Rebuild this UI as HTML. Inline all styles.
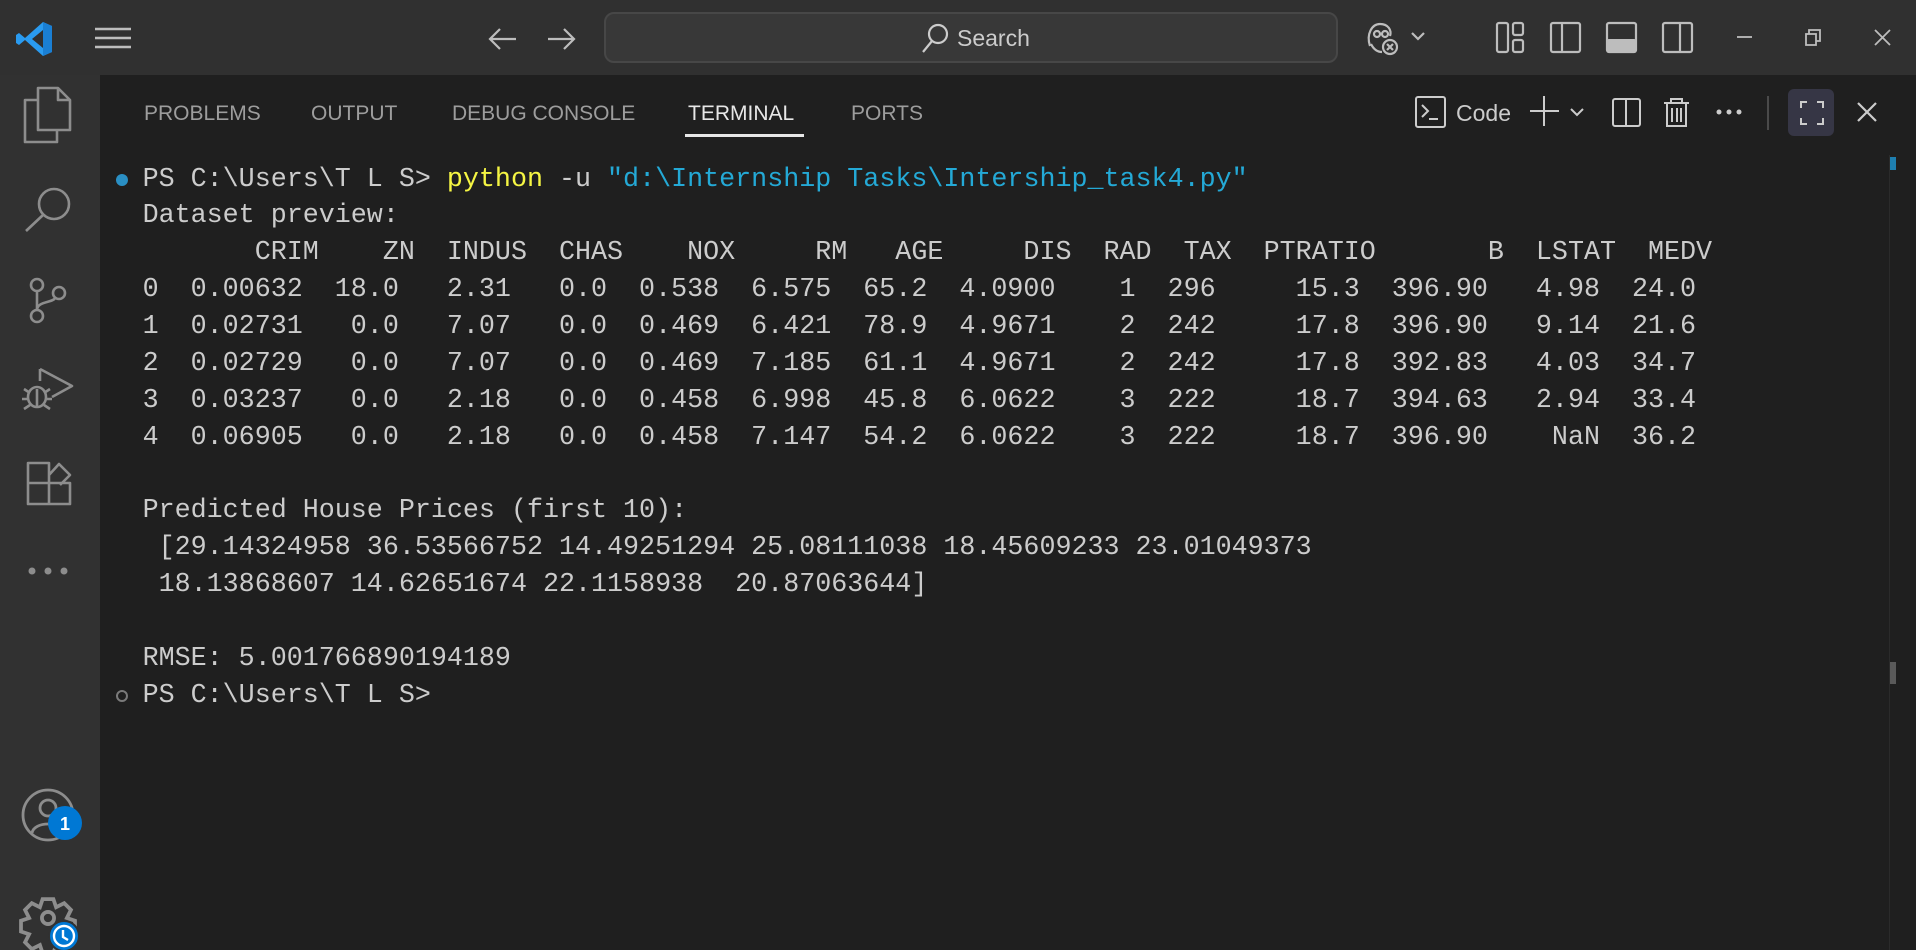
<!DOCTYPE html>
<html><head><meta charset="utf-8"><style>
*{margin:0;padding:0;box-sizing:border-box}
html,body{width:1916px;height:950px;overflow:hidden;background:#1f1f1f}
body{position:relative;font-family:"Liberation Sans",sans-serif}
.title{position:absolute;left:0;top:0;width:1916px;height:75px;background:#303030}
.act{position:absolute;left:0;top:75px;width:100px;height:875px;background:#313131}
.search{position:absolute;left:604px;top:12px;width:734px;height:51px;border:2px solid #474747;border-radius:10px;background:#383838}
.search span{position:absolute;left:351px;top:11px;font-size:23px;color:#cccccc}
.tab{position:absolute;top:102px;font-size:21px;color:#9d9d9d}
.term{position:absolute;left:142.6px;top:161.6px;font-family:"Liberation Mono",monospace;font-size:26.7px;line-height:36.86px;color:#cccccc;white-space:pre}
.y{color:#f5f543}.c{color:#24a9d6}
svg{position:absolute;overflow:visible}
</style></head><body>
<div class="title"></div>
<div class="act"></div>

<svg style="left:16px;top:20px" width="38" height="38" viewBox="0 0 38 38">
<path d="M27 2 L36 6 V32 L27 36 L9 20 L3 25 L0 23 V15 L3 13 L9 18 Z M27 10 L16 19 L27 28 Z" fill="#2a9bf0"/>
<path d="M27 2 L36 6 V32 L27 36 Z" fill="#1a7fd4"/>
</svg>
<svg style="left:95px;top:27px" width="36" height="22"><g stroke="#bdbdbd" stroke-width="2.4"><line x1="0" y1="2" x2="36" y2="2"/><line x1="0" y1="11" x2="36" y2="11"/><line x1="0" y1="20" x2="36" y2="20"/></g></svg>
<svg style="left:488px;top:26px" width="90" height="26"><g stroke="#bdbdbd" stroke-width="2.2" fill="none"><path d="M2 13 H28 M12 3 L2 13 L12 23"/><path d="M60 13 H86 M76 3 L86 13 L76 23"/></g></svg>
<div class="search"><svg style="left:314px;top:8px" width="30" height="32"><g stroke="#cccccc" stroke-width="2.2" fill="none"><circle cx="18" cy="12" r="9"/><line x1="12" y1="19" x2="3" y2="30"/></g></svg><span>Search</span></div>

<svg style="left:1366px;top:20px" width="64" height="36"><g stroke="#bdbdbd" stroke-width="2.2" fill="none"><path d="M4 26 C0 14 6 4 14 4 C22 4 26 10 24 16"/><circle cx="11" cy="14" r="3"/><circle cx="19" cy="14" r="3"/><path d="M5 24 C8 30 12 32 16 32"/><circle cx="24" cy="27" r="7"/><path d="M21 24 L27 30 M27 24 L21 30"/><path d="M46 13 L52 19 L58 13"/></g></svg>
<svg style="left:1496px;top:22px" width="200" height="32"><g stroke="#bdbdbd" stroke-width="2.2" fill="none">
<rect x="1" y="1" width="11" height="29" rx="2"/><rect x="17" y="1" width="10" height="12" rx="2"/><rect x="17" y="18" width="10" height="12" rx="2"/>
<rect x="55" y="1" width="29" height="29" rx="2"/><line x1="66" y1="1" x2="66" y2="30"/>
<rect x="111" y="1" width="29" height="29" rx="2"/>
<rect x="167" y="1" width="29" height="29" rx="2"/><line x1="184" y1="1" x2="184" y2="30"/></g>
<rect x="111" y="17" width="29" height="14" rx="2" fill="#bdbdbd"/></svg>
<svg style="left:1736px;top:26px" width="160" height="24"><g stroke="#bdbdbd" stroke-width="1.8" fill="none"><line x1="1" y1="11" x2="16" y2="11"/><rect x="70" y="8" width="10" height="11"/><path d="M73 8 V4 H84 V15 H80"/><path d="M139 4 L154 19 M154 4 L139 19"/></g></svg>

<svg style="left:0;top:75px" width="100" height="875"><g stroke="#8d8d8d" stroke-width="2.6" fill="none" stroke-linejoin="round">
<path d="M38 13 H58 L70 25 V55 H38 Z M58 13 V25 H70"/><path d="M38 25 H25 V67 H57 V55"/>
<circle cx="54" cy="129" r="15"/><line x1="43" y1="140" x2="26" y2="156"/>
<circle cx="37" cy="210" r="6"/><circle cx="37" cy="241" r="6"/><circle cx="59" cy="218" r="6"/><line x1="37" y1="216" x2="37" y2="235"/><path d="M37 235 C37 226 53 228 55 223"/>
<path d="M40 294 L72 311 L52 322"/><path d="M40 294 V306"/><ellipse cx="37" cy="322" rx="9" ry="10"/><path d="M24 314 L30 318 M50 314 L44 318 M22 324 H28 M46 324 H52 M24 334 L30 330 M50 334 L44 330 M37 314 V332"/>
<path d="M28 388 H49 V429 H28 Z M28 408 H70 V429 H49 M49 400 L59 389 L70 400 L60 410"/>
</g><g fill="#8d8d8d"><circle cx="32" cy="496" r="3.5"/><circle cx="48" cy="496" r="3.5"/><circle cx="64" cy="496" r="3.5"/></g></svg>
<svg style="left:20px;top:788px" width="80" height="162"><g stroke="#8d8d8d" stroke-width="2.8" fill="none"><circle cx="28" cy="27" r="25"/><circle cx="28" cy="20" r="8"/><path d="M12 45 C14 33 42 33 44 45"/>
<g transform="translate(28 130) scale(1.35) translate(-28 -108)"><path d="M28 108 m-4 -14 h8 l2 6 l6 -3 l5 5 l-3 6 l6 2 v8 l-6 2 l3 6 l-5 5 l-6 -3 l-2 6 h-8 l-2 -6 l-6 3 l-5 -5 l3 -6 l-6 -2 v-8 l6 -2 l-3 -6 l5 -5 l6 3 z"/><circle cx="28" cy="108" r="4.5"/></g></g>
<circle cx="45" cy="35" r="17" fill="#0078d4"/><text x="45" y="42" font-family="Liberation Sans" font-weight="bold" font-size="18" fill="#fff" text-anchor="middle">1</text>
<circle cx="44" cy="148" r="15" fill="#0078d4" stroke="#313131" stroke-width="2"/><circle cx="44" cy="148" r="10" fill="none" stroke="#fff" stroke-width="2.4"/><path d="M43 142 V149 L48 152" stroke="#fff" stroke-width="2.4" fill="none"/></svg>

<div class="tab" style="left:144px">PROBLEMS</div>
<div class="tab" style="left:311px">OUTPUT</div>
<div class="tab" style="left:452px">DEBUG CONSOLE</div>
<div class="tab" style="left:688px;color:#e7e7e7">TERMINAL</div>
<div style="position:absolute;left:685px;top:134px;width:119px;height:3px;background:#e7e7e7"></div>
<div class="tab" style="left:851px">PORTS</div>

<svg style="left:1415px;top:96px" width="32" height="32"><g stroke="#cccccc" stroke-width="2" fill="none"><rect x="1" y="1" width="29" height="30" rx="2"/><path d="M7 9 L13 15 L7 21 M14 23 H23"/></g></svg>
<div style="position:absolute;left:1456px;top:100px;font-size:23px;color:#cccccc">Code</div>
<svg style="left:1530px;top:96px" width="170" height="34"><g stroke="#cccccc" stroke-width="2" fill="none"><path d="M14 0 V30 M0 15 H29"/><path d="M41 13 L47 19 L53 13"/><rect x="83" y="3" width="27" height="27" rx="2"/><line x1="96" y1="3" x2="96" y2="30"/>
<path d="M134 7 H159 M141 7 V3 H152 V7 M137 7 V30 H156 V7 M142 12 V26 M147 12 V26 M151 12 V26"/></g>
<g fill="#cccccc"><circle cx="189" cy="16" r="2.5"/><circle cx="199" cy="16" r="2.5"/><circle cx="209" cy="16" r="2.5"/></g></svg>
<div style="position:absolute;left:1767px;top:96px;width:2px;height:34px;background:#4a4a4a"></div>
<div style="position:absolute;left:1788px;top:89px;width:46px;height:47px;background:#363645;border-radius:6px"></div>
<svg style="left:1800px;top:101px" width="24" height="24"><g stroke="#cccccc" stroke-width="2" fill="none"><path d="M1 7 V1 H7 M17 1 H23 V7 M23 17 V23 H17 M7 23 H1 V17"/></g></svg>
<svg style="left:1857px;top:102px" width="20" height="20"><g stroke="#cccccc" stroke-width="2.2"><path d="M1 1 L19 19 M19 1 L1 19"/></g></svg>

<div style="position:absolute;left:1889px;top:155px;width:1px;height:795px;background:#2b2b2b"></div>
<div style="position:absolute;left:1890px;top:157px;width:6px;height:13px;background:#1e7fb0"></div>
<div style="position:absolute;left:1890px;top:662px;width:6px;height:22px;background:#5a5a5a"></div>

<div style="position:absolute;left:116px;top:174px;width:12px;height:12px;border-radius:50%;background:#2a8fc4"></div>
<div style="position:absolute;left:116px;top:690px;width:12px;height:12px;border-radius:50%;border:2px solid #7a7a7a"></div>

<div class="term">PS C:\Users\T L S&gt; <span class="y">python</span> -u <span class="c">"d:\Internship Tasks\Intership_task4.py"</span>
Dataset preview:
       CRIM    ZN  INDUS  CHAS    NOX     RM   AGE     DIS  RAD  TAX  PTRATIO       B  LSTAT  MEDV
0  0.00632  18.0   2.31   0.0  0.538  6.575  65.2  4.0900    1  296     15.3  396.90   4.98  24.0
1  0.02731   0.0   7.07   0.0  0.469  6.421  78.9  4.9671    2  242     17.8  396.90   9.14  21.6
2  0.02729   0.0   7.07   0.0  0.469  7.185  61.1  4.9671    2  242     17.8  392.83   4.03  34.7
3  0.03237   0.0   2.18   0.0  0.458  6.998  45.8  6.0622    3  222     18.7  394.63   2.94  33.4
4  0.06905   0.0   2.18   0.0  0.458  7.147  54.2  6.0622    3  222     18.7  396.90    NaN  36.2

Predicted House Prices (first 10):
 [29.14324958 36.53566752 14.49251294 25.08111038 18.45609233 23.01049373
 18.13868607 14.62651674 22.1158938  20.87063644]

RMSE: 5.001766890194189
PS C:\Users\T L S&gt;</div>
</body></html>
